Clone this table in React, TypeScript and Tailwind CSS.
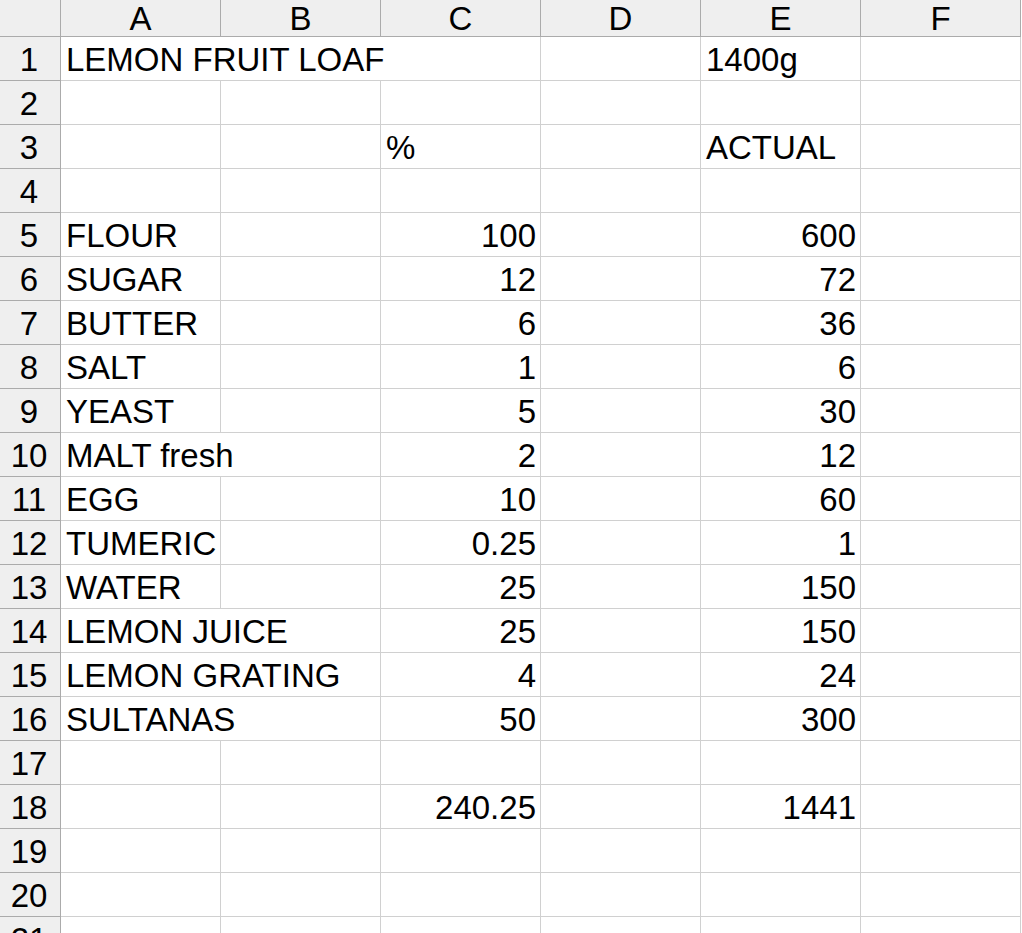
type Cell = { v?: string; right?: boolean; span?: number };

const cols = ['A', 'B', 'C', 'D', 'E', 'F'];

const item = (name: string, pct: string, actual: string, span = 1): Cell[] => {
  const cells: Cell[] = [{ v: name, span }];
  for (let i = span; i < 2; i++) cells.push({});
  cells.push({ v: pct, right: true }, {}, { v: actual, right: true }, {});
  return cells;
};

const blank = (): Cell[] => cols.map(() => ({}));

const rows: Cell[][] = [
  [{ v: 'LEMON FRUIT LOAF', span: 3 }, {}, { v: '1400g' }, {}],
  blank(),
  [{}, {}, { v: '%' }, {}, { v: 'ACTUAL' }, {}],
  blank(),
  item('FLOUR', '100', '600'),
  item('SUGAR', '12', '72'),
  item('BUTTER', '6', '36'),
  item('SALT', '1', '6'),
  item('YEAST', '5', '30'),
  item('MALT fresh', '2', '12', 2),
  item('EGG', '10', '60'),
  item('TUMERIC', '0.25', '1'),
  item('WATER', '25', '150'),
  item('LEMON JUICE', '25', '150', 2),
  item('LEMON GRATING', '4', '24', 2),
  item('SULTANAS', '50', '300', 2),
  blank(),
  [{}, {}, { v: '240.25', right: true }, {}, { v: '1441', right: true }, {}],
  blank(),
  blank(),
  blank(),
];

export default function App() {
  return (
    <div className="h-[933px] w-[1022px] overflow-hidden bg-white text-black font-['Liberation_Sans',Arial,sans-serif] text-[33px] leading-none">
      {/* column headers */}
      <div className="flex h-[37px]">
        <div className="w-[61px] shrink-0 bg-[#efefef] border-r border-b border-[#ababab]" />
        {cols.map((c) => (
          <div
            key={c}
            className="w-[160px] shrink-0 flex items-center justify-center bg-[#efefef] border-r border-b border-[#ababab]"
          >
            {c}
          </div>
        ))}
      </div>

      {rows.map((row, r) => (
        <div key={r} className="flex h-[44px]">
          <div className="w-[61px] shrink-0 flex items-center justify-center pt-[2px] pr-[2px] bg-[#efefef] border-r border-b border-[#ababab]">
            {r + 1}
          </div>
          {row.map((cell, i) => (
            <div
              key={i}
              className={`shrink-0 flex items-center pt-[2px] whitespace-nowrap border-r border-b border-[#d0d0d0] ${
                cell.span === 3 ? 'w-[480px]' : cell.span === 2 ? 'w-[320px]' : 'w-[160px]'
              } ${cell.right ? 'justify-end pr-[4px]' : 'justify-start pl-[5px]'}`}
            >
              {cell.v}
            </div>
          ))}
        </div>
      ))}
    </div>
  );
}
